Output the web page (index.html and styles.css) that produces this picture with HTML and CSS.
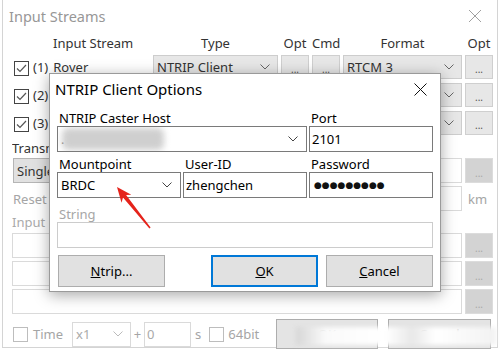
FILE: index.html
```html
<!DOCTYPE html>
<html lang="en">
<head>
  <meta charset="UTF-8" />
  <title>Input Streams</title>
  <link rel="stylesheet" href="styles.css">
</head>
<body>
  <div class="window">
    <div class="titlebar">
      <span class="title">Input Streams</span>
      <svg class="close" width="14" height="14" viewBox="0 0 14 14"><path d="M1 1L13 13M13 1L1 13"/></svg>
    </div>

    <div class="streams">
      <div class="hd hd-name">Input Stream</div>
      <div class="hd">Type</div>
      <div class="hd">Opt</div>
      <div class="hd">Cmd</div>
      <div class="hd">Format</div>
      <div class="hd">Opt</div>

      <div class="stream">
        <svg class="cb" width="15" height="15" viewBox="0 0 15 15"><rect x="0.5" y="0.5" width="14" height="14"/><path d="M3 7.5L6 10.5L12 4"/></svg>
        <span>(1)</span><span class="name">Rover</span>
      </div>
      <div class="combo">NTRIP Client<svg class="chev" width="10" height="6" viewBox="0 0 10 6"><path d="M0.5 0.5L5 5L9.5 0.5"/></svg></div>
      <button class="dots">...</button>
      <button class="dots">...</button>
      <div class="combo">RTCM 3<svg class="chev" width="10" height="6" viewBox="0 0 10 6"><path d="M0.5 0.5L5 5L9.5 0.5"/></svg></div>
      <button class="dots">...</button>

      <div class="stream">
        <svg class="cb" width="15" height="15" viewBox="0 0 15 15"><rect x="0.5" y="0.5" width="14" height="14"/><path d="M3 7.5L6 10.5L12 4"/></svg>
        <span>(2)</span>
      </div>
      <div class="combo"><span></span><svg class="chev" width="10" height="6" viewBox="0 0 10 6"><path d="M0.5 0.5L5 5L9.5 0.5"/></svg></div>
      <button class="dots"></button>
      <button class="dots"></button>
      <div class="combo"><span></span><svg class="chev" width="10" height="6" viewBox="0 0 10 6"><path d="M0.5 0.5L5 5L9.5 0.5"/></svg></div>
      <button class="dots">...</button>

      <div class="stream">
        <svg class="cb" width="15" height="15" viewBox="0 0 15 15"><rect x="0.5" y="0.5" width="14" height="14"/><path d="M3 7.5L6 10.5L12 4"/></svg>
        <span>(3)</span>
      </div>
      <div class="combo"><span></span><svg class="chev" width="10" height="6" viewBox="0 0 10 6"><path d="M0.5 0.5L5 5L9.5 0.5"/></svg></div>
      <button class="dots"></button>
      <button class="dots"></button>
      <div class="combo"><span></span><svg class="chev" width="10" height="6" viewBox="0 0 10 6"><path d="M0.5 0.5L5 5L9.5 0.5"/></svg></div>
      <button class="dots">...</button>
    </div>

    <div class="lower">
      <div class="caption clip">Transmit NMEA GPGGA to Base Station</div>
      <div class="row">
        <div class="combo single"><span>Single</span></div>
        <div class="grow"></div>
        <div class="field off pos"></div>
        <button class="dots off">...</button>
      </div>
      <div class="row">
        <span class="muted reset clip">Reset Cmd</span>
        <div class="grow"></div>
        <div class="field off pos"></div>
        <span class="unit">km</span>
      </div>
      <div class="caption muted clip">Input File Paths</div>
      <div class="row path"><div class="field off grow"></div><button class="dots off">...</button></div>
      <div class="row path"><div class="field off grow"></div><button class="dots off">...</button></div>
      <div class="row path"><div class="field off grow"></div><button class="dots off">...</button></div>

      <div class="row bottom">
        <span class="box"></span>
        <span class="muted time">Time</span>
        <div class="combo off speed">x1<svg class="chev" width="10" height="6" viewBox="0 0 10 6"><path d="M0.5 0.5L5 5L9.5 0.5"/></svg></div>
        <span class="muted plus">+</span>
        <div class="field off offset">0</div>
        <span class="muted sec">s</span>
        <span class="box box64"></span>
        <span class="muted bit">64bit</span>
        <button class="btn ok-main">OK</button>
        <button class="btn cancel-main">Cancel</button>
      </div>
    </div>
  </div>

  <div class="smear"></div>

  <div class="dialog">
    <div class="dlg-title">
      <span>NTRIP Client Options</span>
      <svg class="dlg-close" width="13" height="13" viewBox="0 0 13 13"><path d="M0.5 0.5L12.5 12.5M12.5 0.5L0.5 12.5"/></svg>
    </div>
    <div class="form">
      <label class="span2">NTRIP Caster Host</label>
      <label>Port</label>
      <div class="combo edit span2"><span class="host">.<span class="blur"></span></span><svg class="chev" width="10" height="6" viewBox="0 0 10 6"><path d="M0.5 0.5L5 5L9.5 0.5"/></svg></div>
      <div class="field">2101</div>

      <label class="gap4">Mountpoint</label>
      <label class="gap4">User-ID</label>
      <label class="gap4">Password</label>
      <div class="combo edit">BRDC<svg class="chev" width="10" height="6" viewBox="0 0 10 6"><path d="M0.5 0.5L5 5L9.5 0.5"/></svg></div>
      <div class="field">zhengchen</div>
      <div class="field pw">●●●●●●●●●</div>

      <label class="span3 gap8 disabled">String</label>
      <div class="field span3 disabled"></div>
    </div>
    <div class="dlg-buttons">
      <button class="btn ntrip"><u>N</u>trip...</button>
      <button class="btn default"><u>O</u>K</button>
      <button class="btn"><u>C</u>ancel</button>
    </div>
  </div>

  <svg class="arrow" width="500" height="352" viewBox="0 0 500 352">
    <polygon points="117,187 121.5,202.8 123,197.6 149.4,228.5 150.6,227.5 126.1,195 131.3,194.7"/>
  </svg>
</body>
</html>
```

FILE: styles.css
```css
* { box-sizing: border-box; }
body { margin: 0; position: relative; width: 500px; height: 352px; overflow: hidden; background: #fff; font-family: "Noto Sans", "Open Sans", sans-serif; font-size: 13px; line-height: 16px; color: #222; }
button { font: inherit; padding: 0; cursor: default; }

.window { margin-left: 2px; width: 496px; height: 348px; border: 1px solid #d4d4d4; border-top: 0; background: #fff; }
.titlebar { height: 32px; display: flex; align-items: center; justify-content: space-between; padding: 0 15px 0 6px; }
.title { font-size: 14.5px; color: #979797; }
.close { fill: none; stroke: #a0a0a0; stroke-width: 1; }

.streams { display: grid; grid-template-columns: 138px 125px 28px 28px 119px 28px; grid-template-rows: 15px; grid-auto-rows: 24px; column-gap: 3px; row-gap: 4px; margin-top: 4px; padding-left: 9px; }
.hd { text-align: center; line-height: 15px; color: #333; }
.hd-name { text-align: left; padding-left: 41px; }
.stream { display: flex; align-items: center; color: #333; white-space: nowrap; }
.stream .name { margin-left: 5px; }
.cb { margin: 3px 4px 0 2px; fill: none; stroke: #444; stroke-width: 1; flex: none; }
.cb path { stroke: #555; stroke-width: 1.2; }

.combo { display: flex; align-items: center; justify-content: space-between; border: 1px solid #cdcdcd; background: #e7e7e7; padding: 0 7px 0 3px; color: #333; white-space: nowrap; overflow: hidden; }
.chev { fill: none; stroke: #666; stroke-width: 1; flex: none; }
.dots { border: 1px solid #cfcfcf; background: #e7e7e7; color: #555; font-size: 10px; line-height: 10px; padding-top: 4px; }
.dots.off { background: #d3d3d3; border-color: #dcdcdc; color: #a8a8a8; }

.lower { padding: 0 4px 0 9px; }
.clip { width: 37px; overflow: hidden; white-space: nowrap; flex: none; }
.caption { margin-top: 5px; color: #333; }
.caption.muted { margin-top: 3px; color: #aaa; }
.muted { color: #a5a5a5; }
.row { display: flex; align-items: center; height: 25px; margin-top: 3px; }
.lower .caption:first-child + .row { margin-top: 2px; }
.row .dots { width: 28px; height: 25px; margin-left: 3px; }
.grow { flex: 1; }
.field { border: 1px solid #7a7a7a; background: #fff; padding: 0 2px; display: flex; align-items: center; white-space: nowrap; }
.field.off { border-color: #dadada; height: 25px; color: #aaa; }
.pos { width: 150px; }
.single { width: 120px; height: 25px; margin-left: 1px; background: #e1e1e1; border-color: #b5b5b5; }
.single span { width: 33px; overflow: hidden; }
.reset { margin-left: 1px; width: 36px; }
.unit { width: 28px; margin-left: 3px; padding-left: 3px; color: #a5a5a5; }
.path { height: 25px; }
.row.path + .row.path { margin-top: 3px; }

.row.bottom { height: 30px; margin-top: 5px; }
.box { width: 15px; height: 15px; border: 1px solid #bdbdbd; margin-left: 1px; }
.time { margin-left: 5px; }
.speed { width: 59px; height: 25px; margin-left: 9px; background: #fff; border-color: #dadada; color: #aaa; }
.speed .chev { stroke: #bbb; }
.plus { width: 13px; text-align: center; }
.offset { width: 47px; }
.sec { margin-left: 4px; }
.box64 { margin-left: 8px; }
.bit { margin-left: 4px; }
.btn { height: 30px; border: 1px solid #adadad; background: #e4e4e4; color: #222; }
.ok-main { width: 102px; margin-left: auto; }
.cancel-main { width: 103px; margin-left: 10px; margin-right: 2px; }

.smear { position: absolute; left: 296px; top: 327px; width: 200px; height: 18px; background: linear-gradient(to right, #d6d6d6, #fafafa 15%, #fff 45%, #e8e8e8 58%, #fff 70%, #f2f2f2); filter: blur(2px); }

.dialog { position: absolute; left: 49px; top: 73px; width: 392px; height: 219px; background: #fff; border: 1px solid #9a9a9a; box-shadow: 0 3px 14px rgba(0,0,0,0.35); padding: 0 7px; color: #000; }
.dlg-title { height: 36px; margin: 0 -7px; padding: 0 13px 6px 5px; display: flex; align-items: center; justify-content: space-between; font-size: 15px; }
.dlg-close { fill: none; stroke: #111; stroke-width: 1; }
.form { display: grid; grid-template-columns: repeat(3, 124px); column-gap: 2px; }
.form label { padding-left: 2px; line-height: 16px; }
.form .gap4 { margin-top: 4px; }
.form .gap8 { margin-top: 8px; }
.form .field, .form .combo { height: 26px; }
.span2 { grid-column: span 2; }
.span3 { grid-column: span 3; }
.combo.edit { background: #fff; border-color: #7a7a7a; color: #000; padding-right: 8px; }
.combo.edit .chev { stroke: #444; }
.host { display: flex; align-items: center; color: #555; }
.blur { display: inline-block; width: 102px; height: 22px; margin-left: -2px; background: #cfcfcf; border-radius: 6px; filter: blur(3px); }
.pw { font-family: "DejaVu Sans", sans-serif; font-size: 9px; letter-spacing: 0; color: #111; padding-left: 4px; }
label.disabled { color: #a6a6a6; }
.field.disabled { border-color: #cccccc; }
.dlg-buttons { display: flex; gap: 8px; margin-top: 7px; }
.dlg-buttons .btn { width: 107px; height: 32px; background: #e1e1e1; color: #000; }
.dlg-buttons .ntrip { margin-left: 1px; margin-right: auto; }
.dlg-buttons .default { border: 2px solid #0078d7; }

.arrow { position: absolute; left: 0; top: 0; pointer-events: none; }
.arrow polygon { fill: #e5231b; }
```
